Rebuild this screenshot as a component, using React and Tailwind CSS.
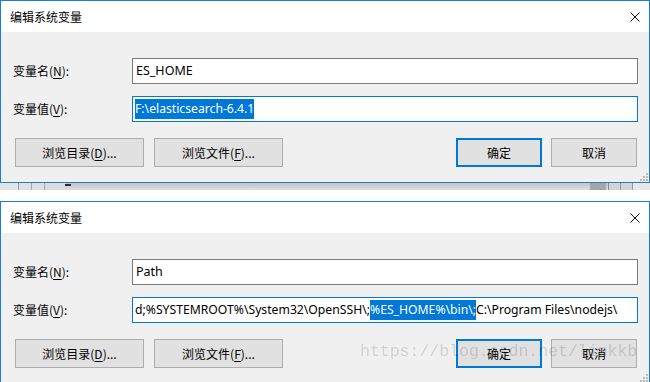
import React from 'react';

const cjk = { fontFamily: '"Noto Sans CJK SC", "Noto Sans", sans-serif' };
const latin = { fontFamily: '"Noto Sans", "Noto Sans CJK SC", sans-serif' };

function CloseIcon() {
  return (
    <svg width="10" height="10" viewBox="0 0 10 10" className="block">
      <path d="M0.5 0.5 L9.5 9.5 M9.5 0.5 L0.5 9.5" stroke="#111" strokeWidth="1" />
    </svg>
  );
}

function Grip() {
  return (
    <svg width="8" height="8" viewBox="0 0 8 8" className="absolute bottom-[1px] right-[1px]">
      <g fill="#bdbdbd">
        <rect x="6" y="0" width="2" height="2" />
        <rect x="3" y="3" width="2" height="2" />
        <rect x="6" y="3" width="2" height="2" />
        <rect x="0" y="6" width="2" height="2" />
        <rect x="3" y="6" width="2" height="2" />
        <rect x="6" y="6" width="2" height="2" />
      </g>
    </svg>
  );
}

function Label({ text, hot }) {
  return (
    <div className="w-[131px] shrink-0 pl-[12px] text-[12px] text-black" style={cjk}>
      {text}(<span className="underline underline-offset-2">{hot}</span>):
    </div>
  );
}

function Button({ children, primary, className = '' }) {
  return (
    <div
      className={`flex h-[29px] items-center justify-center bg-[#e1e1e1] text-[12px] text-black ${
        primary ? 'border-2 border-[#0078d7]' : 'border border-[#adadad]'
      } ${className}`}
      style={cjk}
    >
      {children}
    </div>
  );
}

function Dialog({ name, value, className = '' }) {
  return (
    <div className={`border-[#1a7fd4] bg-[#f0f0f0] ${className}`}>
      <div className="flex h-[31px] items-center justify-between bg-white pl-[9px] pr-[9px]">
        <span className="text-[12px] text-black" style={cjk}>编辑系统变量</span>
        <CloseIcon />
      </div>
      <div className="relative pt-[26px] pb-[15px]">
        <div className="flex items-center pr-[11px]">
          <Label text="变量名" hot="N" />
          <div
            className="flex h-[26px] flex-1 items-center border border-[#7a7a7a] bg-white px-[3px] text-[12.5px] text-black"
            style={latin}
          >
            {name}
          </div>
        </div>
        <div className="mt-[12px] flex items-center pr-[11px]">
          <Label text="变量值" hot="V" />
          <div
            className="flex h-[26px] flex-1 items-center overflow-hidden whitespace-nowrap border border-[#0078d7] bg-white px-[2px] text-[12.2px] text-black"
            style={latin}
          >
            {value}
          </div>
        </div>
        <div className="mt-[16px] flex items-center justify-between pl-[14px] pr-[12px]">
          <div className="flex gap-[10px]">
            <Button className="w-[129px]">
              浏览目录(<span className="underline underline-offset-2">D</span>)...
            </Button>
            <Button className="w-[129px]">
              浏览文件(<span className="underline underline-offset-2">F</span>)...
            </Button>
          </div>
          <div className="flex gap-[9px]">
            <Button primary className="w-[86px]">确定</Button>
            <Button className="w-[86px]">取消</Button>
          </div>
        </div>
        <Grip />
      </div>
    </div>
  );
}

function Strip() {
  return (
    <div className="flex h-[7px] bg-linear-to-b from-[#c4c4c4] to-[#dedede]">
      <div className="w-[18px] bg-[#e4e4e4]" />
      <div className="w-px bg-[#9a9a9a]" />
      <div className="w-[12px] bg-[#e0e0e0]" />
      <div className="w-px bg-[#a8a8a8]" />
      <div className="w-[12px] bg-[#e0e0e0]" />
      <div className="w-px bg-[#a8a8a8]" />
      <div className="w-[20px] bg-[#dcdcdc]" />
      <div className="mt-[1px] h-[2px] w-[6px] bg-[#3a2a20]" />
      <div className="flex-1" />
      <div className="w-[16px] bg-[#a6a6a6]" />
      <div className="w-[2px]" />
      <div className="w-px bg-[#8c8c8c]" />
      <div className="w-[11px] bg-[#d4d4d4]" />
      <div className="w-px bg-[#9a9a9a]" />
      <div className="w-[11px] bg-[#d4d4d4]" />
      <div className="w-px bg-[#9a9a9a]" />
      <div className="w-[17px] bg-[#e8e8e8]" />
    </div>
  );
}

export default function App() {
  return (
    <div className="relative h-[382px] w-[650px] overflow-hidden bg-white">
      <Dialog
        className="border"
        name="ES_HOME"
        value={
          <span className="bg-[#0078d7] py-[1px] text-white">{'F:\\elasticsearch-6.4.1'}</span>
        }
      />
      <Strip />
      <div className="h-[11px] bg-white" />
      <Dialog
        className="border-x border-t"
        name="Path"
        value={
          <>
            <span>{'d;%SYSTEMROOT%\\System32\\OpenSSH\\;'}</span>
            <span className="bg-[#0078d7] py-[1px] text-white">{'%ES_HOME%\\bin\\;'}</span>
            <span>{'C:\\Program Files\\nodejs\\'}</span>
          </>
        }
      />
      <div
        className="pointer-events-none absolute left-[360px] top-[344px] text-[16.5px] leading-none text-black/15"
        style={{ fontFamily: '"Liberation Mono", monospace' }}
      >
        https://blog.csdn.net/linkkb
      </div>
    </div>
  );
}
